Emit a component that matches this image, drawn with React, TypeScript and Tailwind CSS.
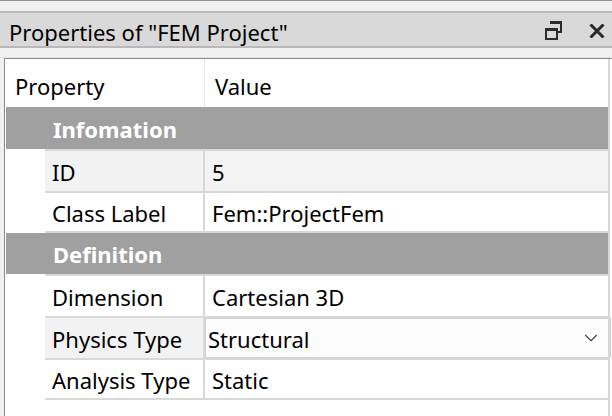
import { ChevronDown } from "lucide-react";

type Row = { name: string; value: string; kind?: "hover" | "combo" };

const groups: { title: string; h: string; rows: Row[] }[] = [
  {
    title: "Infomation",
    h: "h-[42px]",
    rows: [
      { name: "ID", value: "5", kind: "hover" },
      { name: "Class Label", value: "Fem::ProjectFem" },
    ],
  },
  {
    title: "Definition",
    h: "h-[41px]",
    rows: [
      { name: "Dimension", value: "Cartesian 3D" },
      { name: "Physics Type", value: "Structural", kind: "combo" },
      { name: "Analysis Type", value: "Static" },
    ],
  },
];

function RestoreIcon() {
  return (
    <svg width="18" height="19" viewBox="0 0 18 19" className="text-[#2b2b2b]">
      <path d="M6 1H16V11H13" fill="none" stroke="currentColor" strokeWidth="2" />
      <rect x="5" y="0" width="12" height="3" fill="currentColor" />
      <rect x="1" y="8" width="11" height="10" fill="none" stroke="currentColor" strokeWidth="2" />
      <rect x="0" y="7" width="13" height="3" fill="currentColor" />
    </svg>
  );
}

function CloseIcon() {
  return (
    <svg width="16" height="14" viewBox="0 0 16 14" className="text-[#2b2b2b]">
      <path d="M1.5 0.5L14.5 13.5M14.5 0.5L1.5 13.5" stroke="currentColor" strokeWidth="3" />
    </svg>
  );
}

function PropRow({ row, last }: { row: Row; last: boolean }) {
  const b = last ? "border-b-2" : "";
  const nameBg = row.kind ? "bg-[#f2f2f2]" : "bg-white";
  const valBg = row.kind === "hover" ? "bg-[#f3f3f3]" : "bg-white";
  return (
    <div className="flex">
      <div className="w-[40px] shrink-0 bg-white" />
      <div className={`w-[158px] shrink-0 h-[42px] border-t-2 ${b} border-[#d8d8d8] ${nameBg} pl-[7px] pt-[3px] flex items-center`}>
        {row.name}
      </div>
      <div className="w-[2px] shrink-0 bg-[#d8d8d8]" />
      {row.kind === "combo" ? (
        <div className={`flex-1 h-[42px] border-t-2 ${b} border-[#d8d8d8] bg-white flex`}>
          <div className="flex-1 -mr-[3px] border border-[#cfcfcf] bg-[#fcfcfc] flex items-center pl-[2px] pr-[8px] pt-[3px]">
            <span className="flex-1">{row.value}</span>
            <ChevronDown size={22} strokeWidth={1.2} className="text-[#444] -mt-[3px]" />
          </div>
        </div>
      ) : (
        <div className={`flex-1 h-[42px] border-t-2 ${b} border-[#d8d8d8] ${valBg} pl-[7px] pt-[3px] flex items-center`}>
          {row.value}
        </div>
      )}
    </div>
  );
}

export default function App() {
  return (
    <div
      className="w-[612px] h-[416px] bg-[#f0f0f0] overflow-hidden flex flex-col text-black"
      style={{ fontFamily: '"Noto Sans", "Open Sans", sans-serif' }}
    >
      <div className="h-[1px] bg-[#8e8e8e]" />
      <div className="h-[10px]" />
      {/* Title bar */}
      <div className="h-[37px] bg-[#d9d9d9] border-y-2 border-[#b9b9b9] flex items-center pl-[9px] pr-[7px]">
        <span className="flex-1 text-[22px] leading-none pt-[5px]">Properties of "FEM Project"</span>
        <div className="flex items-center gap-[26px] pt-[2px]">
          <RestoreIcon />
          <CloseIcon />
        </div>
      </div>
      <div className="h-[10px] border-b border-[#e4e4e4]" />

      {/* Property grid */}
      <div className="flex-1 ml-[4px] border-l border-t border-[#8a8a98] bg-white flex text-[22px]">
        <div className="flex-1 flex flex-col">
          <div className="h-[48px] flex">
            <div className="w-[199px] shrink-0 pl-[10px] flex items-center pt-[6px]">Property</div>
            <div className="w-[1px] bg-[#e6e6e6]" />
            <div className="flex-1 pl-[10px] flex items-center pt-[6px]">Value</div>
          </div>
          {groups.map((g) => (
            <div key={g.title} className="flex flex-col">
              <div className={`${g.h} ml-[1px] bg-[#a0a0a0] pl-[47px] pt-[2px] flex items-center font-bold text-white`}>
                {g.title}
              </div>
              {g.rows.map((r, i) => (
                <PropRow key={r.name} row={r} last={i === g.rows.length - 1} />
              ))}
            </div>
          ))}
        </div>
        <div className="w-[2px] bg-[#d8d8d8]" />
        <div className="w-[2px]" />
      </div>
    </div>
  );
}
